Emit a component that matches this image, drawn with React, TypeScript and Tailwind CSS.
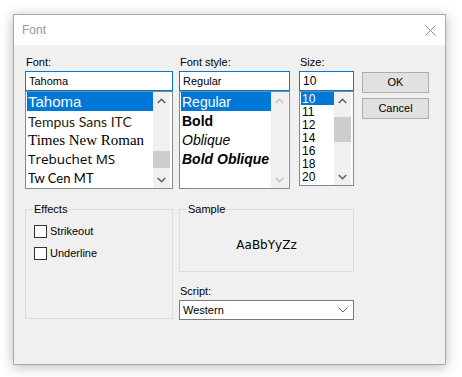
const ui = { fontFamily: '"Liberation Sans", Arial, sans-serif' };

function Arrow({ up, light }: { up?: boolean; light?: boolean }) {
  return (
    <div className="flex h-[17px] w-[17px] items-center justify-center">
      <svg width="9" height="6" viewBox="0 0 9 6">
        <polyline
          points={up ? "0.8,5 4.5,1.3 8.2,5" : "0.8,1 4.5,4.7 8.2,1"}
          fill="none"
          stroke={light ? "#c2c2c2" : "#606060"}
          strokeWidth="1.6"
        />
      </svg>
    </div>
  );
}

function ScrollBar({ thumbTop, thumbH, light }: { thumbTop?: number; thumbH?: number; light?: boolean }) {
  return (
    <div className="flex w-[17px] shrink-0 flex-col bg-[#f0f0f0]">
      <Arrow up light={light} />
      <div className="flex-1">
        {thumbH ? (
          <div className="w-[17px] bg-[#cdcdcd]" style={{ marginTop: thumbTop, height: thumbH }} />
        ) : null}
      </div>
      <Arrow light={light} />
    </div>
  );
}

function Label({ children }: { children: React.ReactNode }) {
  return <div className="h-[13px] pl-px text-[11px] leading-[13px] text-black">{children}</div>;
}

function Button({ children }: { children: React.ReactNode }) {
  return (
    <div className="flex h-[21px] w-[67px] items-center justify-center border border-[#adadad] bg-[#e1e1e1] text-[11px] text-black">
      {children}
    </div>
  );
}

function Check({ label }: { label: string }) {
  return (
    <div className="flex h-[13px] items-center gap-[3px]">
      <div className="h-[13px] w-[13px] border border-[#333333] bg-white" />
      <span className="text-[11px] leading-[13px] text-black">{label}</span>
    </div>
  );
}

const fonts = [
  { name: "Tahoma", style: { fontFamily: '"Liberation Sans", sans-serif', fontSize: 15 } },
  { name: "Tempus Sans ITC", style: { fontFamily: "Lato, sans-serif", fontSize: 14, color: "#2a1a0a" } },
  { name: "Times New Roman", style: { fontFamily: '"Liberation Serif", serif', fontSize: 15 } },
  { name: "Trebuchet MS", style: { fontFamily: '"Open Sans", sans-serif', fontSize: 13.5 } },
  { name: "Tw Cen MT", style: { fontFamily: "Lato, sans-serif", fontSize: 13 } },
];

const styles = [
  { name: "Regular", cls: "" },
  { name: "Bold", cls: "font-bold" },
  { name: "Oblique", cls: "italic" },
  { name: "Bold Oblique", cls: "font-bold italic" },
];

const sizes = ["10", "11", "12", "14", "16", "18", "20"];

export default function App() {
  return (
    <div className="h-[377px] w-[462px] bg-white pl-[13px] pt-[14px]" style={ui}>
      <div className="flex h-[351px] w-[433px] flex-col border border-[#a9a9a9] bg-[#f0f0f0] shadow-[0_2px_12px_rgba(0,0,0,0.28)]">
        {/* title bar */}
        <div className="flex h-[30px] items-center justify-between bg-white pl-[8px] pr-[9px]">
          <span className="text-[12px] text-[#999999]">Font</span>
          <svg width="11" height="11" viewBox="0 0 11 11">
            <path d="M0.5 0.5 L10.5 10.5 M10.5 0.5 L0.5 10.5" stroke="#8a8a8a" strokeWidth="1" />
          </svg>
        </div>

        <div className="px-[11px] pt-[11px]">
          <div className="flex">
            {/* font */}
            <div className="w-[148px]">
              <Label>Font:</Label>
              <div className="mt-[2px] flex h-[20px] items-center border border-[#0078d7] bg-white pl-[3px] text-[11px]">
                Tahoma
              </div>
              <div className="flex h-[98px] border border-[#828790] bg-white pl-px pr-[2px]">
                <div className="flex-1 overflow-hidden">
                  {fonts.map((f, i) => (
                    <div
                      key={f.name}
                      className={`flex h-[19px] items-center whitespace-nowrap pl-[1px] pt-[2px] ${i === 0 ? "bg-[#0078d7] text-white" : "text-black"}`}
                      style={{ ...f.style, ...(i === 0 ? { color: "#fff" } : {}) }}
                    >
                      {f.name}
                    </div>
                  ))}
                </div>
                <ScrollBar thumbTop={42} thumbH={17} />
              </div>
            </div>

            {/* style */}
            <div className="ml-[6px] w-[111px]">
              <Label>Font style:</Label>
              <div className="mt-[2px] flex h-[20px] items-center border border-[#0078d7] bg-white pl-[3px] text-[11px]">
                Regular
              </div>
              <div className="flex h-[98px] border border-[#828790] bg-white pl-px pr-[1px]">
                <div className="flex-1 overflow-hidden">
                  {styles.map((s, i) => (
                    <div
                      key={s.name}
                      className={`flex h-[19px] items-center whitespace-nowrap pl-[1px] pt-[2px] text-[14px] ${s.cls} ${i === 0 ? "bg-[#0078d7] text-white" : "text-black"}`}
                    >
                      {s.name}
                    </div>
                  ))}
                </div>
                <ScrollBar light />
              </div>
            </div>

            {/* size */}
            <div className="ml-[9px] w-[55px]">
              <Label>Size:</Label>
              <div className="mt-[2px] flex h-[20px] items-center border border-[#0078d7] bg-white pl-[3px] text-[12px]">
                10
              </div>
              <div className="flex h-[95px] border border-[#828790] bg-white pl-px pr-[2px]">
                <div className="flex-1 overflow-hidden">
                  {sizes.map((s, i) => (
                    <div
                      key={s}
                      className={`flex h-[13px] items-center pl-[1px] pt-px text-[12px] ${i === 0 ? "bg-[#0078d7] text-white" : "text-black"}`}
                    >
                      {s}
                    </div>
                  ))}
                </div>
                <ScrollBar thumbTop={8} thumbH={25} />
              </div>
            </div>

            {/* buttons */}
            <div className="ml-[8px] flex flex-col gap-[5px] pt-[16px]">
              <Button>OK</Button>
              <Button>Cancel</Button>
            </div>
          </div>

          <div className="mt-[20px] flex">
            {/* effects */}
            <div className="relative h-[110px] w-[148px] border border-[#dcdcdc] pl-[8px] pt-[15px]">
              <span className="absolute -top-[7px] left-[7px] bg-[#f0f0f0] px-[1px] text-[11px] leading-[13px]">
                Effects
              </span>
              <div className="flex flex-col gap-[9px]">
                <Check label="Strikeout" />
                <Check label="Underline" />
              </div>
            </div>

            <div className="ml-[6px] w-[175px]">
              <div className="relative flex h-[63px] items-center justify-center border border-[#dcdcdc] pt-[9px]">
                <span className="absolute -top-[7px] left-[7px] bg-[#f0f0f0] px-[1px] text-[11px] leading-[13px]">
                  Sample
                </span>
                <span className="text-[12px] text-black" style={{ fontFamily: '"DejaVu Sans", sans-serif' }}>
                  AaBbYyZz
                </span>
              </div>
              <div className="mt-[13px]">
                <Label>Script:</Label>
              </div>
              <div className="mt-[2px] flex h-[20px] items-center justify-between border border-[#7a7a7a] bg-white pl-[3px] pr-[5px] text-[11px]">
                <span>Western</span>
                <svg width="10" height="6" viewBox="0 0 10 6">
                  <polyline points="0.5,0.5 5,5 9.5,0.5" fill="none" stroke="#606060" strokeWidth="1" />
                </svg>
              </div>
            </div>
          </div>
        </div>
      </div>
    </div>
  );
}
